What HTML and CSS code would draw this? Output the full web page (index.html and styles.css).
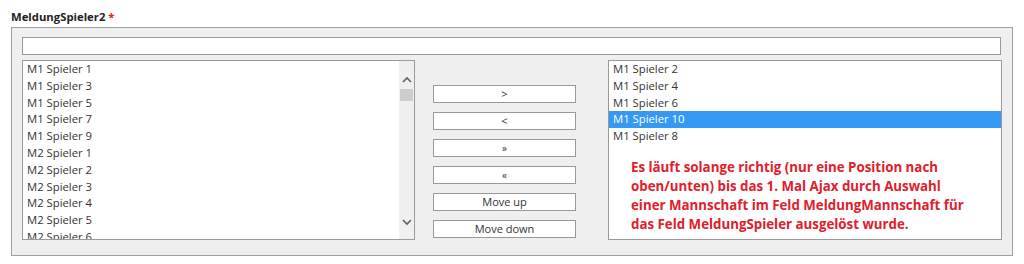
FILE: index.html
```html
<!DOCTYPE html>
<html lang="de">
<head>
    <meta charset="UTF-8">
    <title>MeldungSpieler2</title>
    <link rel="stylesheet" href="styles.css">
</head>
<body>
    <div class="field">
        <div class="field-label">MeldungSpieler2 <span class="req">*</span></div>
        <div class="picker">
            <div class="filter"></div>
            <div class="picker-row">
                <div class="listbox left">
                    <div class="items">
                        <div class="item">M1 Spieler 1</div>
                        <div class="item">M1 Spieler 3</div>
                        <div class="item">M1 Spieler 5</div>
                        <div class="item">M1 Spieler 7</div>
                        <div class="item">M1 Spieler 9</div>
                        <div class="item">M2 Spieler 1</div>
                        <div class="item">M2 Spieler 2</div>
                        <div class="item">M2 Spieler 3</div>
                        <div class="item">M2 Spieler 4</div>
                        <div class="item">M2 Spieler 5</div>
                        <div class="item">M2 Spieler 6</div>
                    </div>
                    <div class="scrollbar">
                        <svg class="arrow" width="14" height="14" viewBox="0 0 14 14"><path d="M3 9 L7 5 L11 9" fill="none" stroke="#606060" stroke-width="1.6"/></svg>
                        <div class="thumb"></div>
                        <div class="track"></div>
                        <svg class="arrow" width="14" height="14" viewBox="0 0 14 14"><path d="M3 5 L7 9 L11 5" fill="none" stroke="#606060" stroke-width="1.6"/></svg>
                    </div>
                </div>
                <div class="buttons">
                    <button type="button">&gt;</button>
                    <button type="button">&lt;</button>
                    <button type="button" class="small">&raquo;</button>
                    <button type="button" class="small">&laquo;</button>
                    <button type="button">Move up</button>
                    <button type="button">Move down</button>
                </div>
                <div class="listbox right">
                    <div class="items">
                        <div class="item">M1 Spieler 2</div>
                        <div class="item">M1 Spieler 4</div>
                        <div class="item">M1 Spieler 6</div>
                        <div class="item selected">M1 Spieler 10</div>
                        <div class="item">M1 Spieler 8</div>
                        <p class="note">Es läuft solange richtig (nur eine Position nach oben/unten) bis das 1. Mal Ajax durch Auswahl einer Mannschaft im Feld MeldungMannschaft für das Feld MeldungSpieler ausgelöst wurde.</p>
                    </div>
                </div>
            </div>
        </div>
    </div>
</body>
</html>
```

FILE: styles.css
```css
body {
    margin: 0;
    font-family: "Open Sans", Arial, sans-serif;
    color: #333;
    background: #fff;
}
.field {
    padding: 9px 0 0 11px;
    width: 1002px;
}
.field-label {
    font-size: 11.3px;
    font-weight: bold;
    line-height: 15px;
    margin-bottom: 3px;
    color: #222;
}
.req {
    color: #e02020;
}
.picker {
    border: 1px solid #a0a0a0;
    background: #efefef;
    padding: 9px 10px 15px 10px;
}
.filter {
    height: 16px;
    border: 1px solid #9a9a9a;
    background: #fff;
    width: 977px;
}
.picker-row {
    display: flex;
    margin-top: 5px;
    height: 180px;
}
.listbox {
    border: 1px solid #9a9a9a;
    background: #fff;
    display: flex;
    box-sizing: border-box;
    height: 180px;
    overflow: hidden;
}
.listbox.left {
    width: 393px;
}
.listbox.right {
    width: 394px;
}
.items {
    flex: 1;
    overflow: hidden;
}
.item {
    font-size: 11.3px;
    line-height: 16.8px;
    height: 16.8px;
    padding-left: 4px;
    color: #333;
    white-space: nowrap;
}
.item.selected {
    background: #3399f3;
    color: #fff;
}
.scrollbar {
    width: 15px;
    background: #f0f0f0;
    display: flex;
    flex-direction: column;
    align-items: center;
    padding: 12px 0 10px;
}
.arrow {
    display: block;
}
.thumb {
    width: 13px;
    height: 12px;
    background: #cdcdcd;
    margin-top: 2px;
}
.track {
    flex: 1;
}
.buttons {
    display: flex;
    flex-direction: column;
    gap: 9px;
    width: 143px;
    margin: 25px 32px 0 18px;
}
.buttons button {
    display: block;
    height: 18px;
    width: 143px;
    padding: 0;
    border: 1px solid #999;
    background: #fff;
    font-family: "Open Sans", Arial, sans-serif;
    font-size: 11px;
    line-height: 16px;
    color: #333;
}
.buttons button.small {
    font-size: 10px;
}
.note {
    margin: 13px 0 0 22px;
    font-size: 13.3px;
    font-weight: bold;
    line-height: 19px;
    color: #e0202c;
    width: 336px;
}
```
